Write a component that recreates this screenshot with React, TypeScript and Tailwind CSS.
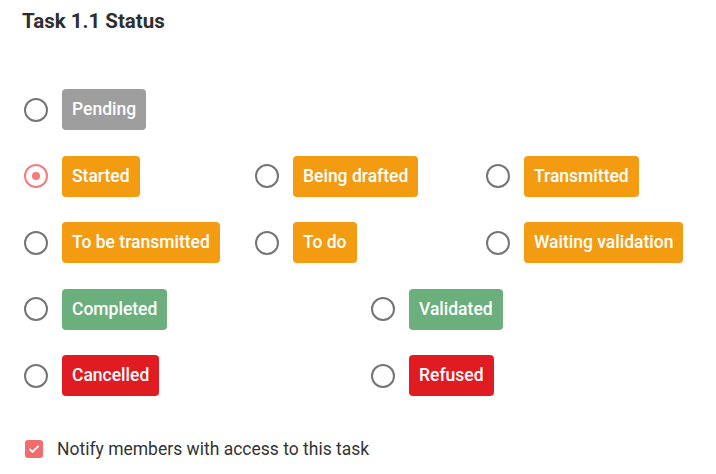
import React, { useState } from "react";

type Status = {
  id: string;
  label: string;
  color: string;
};

const rows: { cols: string; items: Status[] }[] = [
  {
    cols: "grid-cols-[231px_231px_231px]",
    items: [{ id: "pending", label: "Pending", color: "bg-[#9e9e9e]" }],
  },
  {
    cols: "grid-cols-[231px_231px_231px]",
    items: [
      { id: "started", label: "Started", color: "bg-[#f39c12]" },
      { id: "drafted", label: "Being drafted", color: "bg-[#f39c12]" },
      { id: "transmitted", label: "Transmitted", color: "bg-[#f39c12]" },
    ],
  },
  {
    cols: "grid-cols-[231px_231px_231px]",
    items: [
      { id: "tobetransmitted", label: "To be transmitted", color: "bg-[#f39c12]" },
      { id: "todo", label: "To do", color: "bg-[#f39c12]" },
      { id: "waiting", label: "Waiting validation", color: "bg-[#f39c12]" },
    ],
  },
  {
    cols: "grid-cols-[347px_347px]",
    items: [
      { id: "completed", label: "Completed", color: "bg-[#6baf7c]" },
      { id: "validated", label: "Validated", color: "bg-[#6baf7c]" },
    ],
  },
  {
    cols: "grid-cols-[347px_347px]",
    items: [
      { id: "cancelled", label: "Cancelled", color: "bg-[#e01b22]" },
      { id: "refused", label: "Refused", color: "bg-[#e01b22]" },
    ],
  },
];

function Radio({ checked }: { checked: boolean }) {
  return (
    <span
      className={`w-6 h-6 rounded-full border-2 flex items-center justify-center shrink-0 ${
        checked ? "border-[#f57c7c]" : "border-[#757575]"
      }`}
    >
      {checked && <span className="w-2 h-2 rounded-full bg-[#f57c7c]" />}
    </span>
  );
}

export default function App() {
  const [selected, setSelected] = useState<string>("started");
  const [notify, setNotify] = useState<boolean>(true);

  return (
    <div
      className="w-[716px] h-[474px] bg-white text-[#333333] overflow-hidden"
      style={{ fontFamily: "Roboto, 'Noto Sans', sans-serif" }}
    >
      <h2 className="pl-[22px] pt-[7px] text-[20.5px] leading-[28px] font-bold text-[#2e2e2e]">
        Task 1.1 Status
      </h2>

      {/* Status options */}
      <div className="pl-6 mt-[54px] flex flex-col gap-y-[25.5px]">
        {rows.map((row, i) => (
          <div key={i} className={`grid ${row.cols}`}>
            {row.items.map((s) => (
              <label
                key={s.id}
                onClick={() => setSelected(s.id)}
                className="flex items-center gap-[14px] cursor-pointer"
              >
                <Radio checked={selected === s.id} />
                <span
                  className={`${s.color} h-[41px] px-[10px] rounded-[4px] flex items-center text-white text-[17.5px] font-medium`}
                >
                  {s.label}
                </span>
              </label>
            ))}
          </div>
        ))}
      </div>

      {/* Notify checkbox */}
      <label
        onClick={() => setNotify(!notify)}
        className="mt-[41px] pl-[25px] flex items-center gap-[14px] cursor-pointer"
      >
        <span
          className={`w-[18px] h-[18px] rounded-[3px] flex items-center justify-center ${
            notify ? "bg-[#f26b6e]" : "border-2 border-[#757575]"
          }`}
        >
          {notify && (
            <svg viewBox="0 0 24 24" className="w-[14px] h-[14px]" fill="none">
              <path d="M5 12.5l4.5 4.5L19 7.5" stroke="white" strokeWidth="3.2" strokeLinecap="round" strokeLinejoin="round" />
            </svg>
          )}
        </span>
        <span className="text-[17.5px] leading-[24px] text-[#333333]">
          Notify members with access to this task
        </span>
      </label>
    </div>
  );
}
